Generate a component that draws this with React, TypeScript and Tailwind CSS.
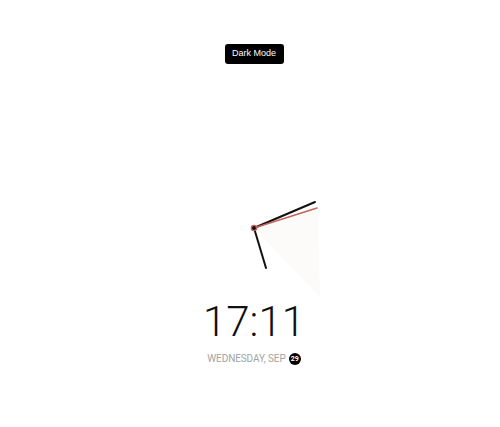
import React from 'react';

// analog clock, 17:11:12 — center sits at (80,80) in the svg
function Clock() {
  return (
    <svg width="160" height="152" viewBox="0 0 160 152" className="block">
      <polygon points="80,80 144,60 146,149" fill="#fdfbfa" />
      <line x1="80" y1="80" x2="92" y2="120" stroke="#111" strokeWidth="2" strokeLinecap="round" />
      <line x1="80" y1="80" x2="141" y2="54" stroke="#111" strokeWidth="2" strokeLinecap="round" />
      <line x1="80" y1="80" x2="143" y2="60" stroke="#c4645c" strokeWidth="1.6" strokeLinecap="round" />
      <circle cx="80" cy="80" r="2.6" fill="#111" stroke="#c4645c" strokeWidth="1.4" />
    </svg>
  );
}

export default function App() {
  return (
    <div className="w-[500px] h-[427px] bg-white flex flex-col items-center pl-[8px] font-['Roboto',sans-serif]">
      <button
        type="button"
        className="mt-[44px] h-[20px] w-[59px] rounded-[3px] bg-black text-white text-[9px] font-['Liberation_Sans',Arial,sans-serif]"
      >
        Dark Mode
      </button>

      <div className="mt-[84px]">
        <Clock />
      </div>

      <div className="text-[42px] leading-[43px] font-light text-[#111]">17:11</div>

      <div className="mt-[10px] flex items-center gap-[3px] h-[12px] text-[10px] leading-[12px] text-[#a3a3a3] tracking-[-0.1px]">
        <span>WEDNESDAY, SEP</span>
        <span className="w-[12px] h-[12px] rounded-full bg-black text-white text-[7px] leading-[12px] font-bold flex items-center justify-center tracking-normal">
          29
        </span>
      </div>
    </div>
  );
}
